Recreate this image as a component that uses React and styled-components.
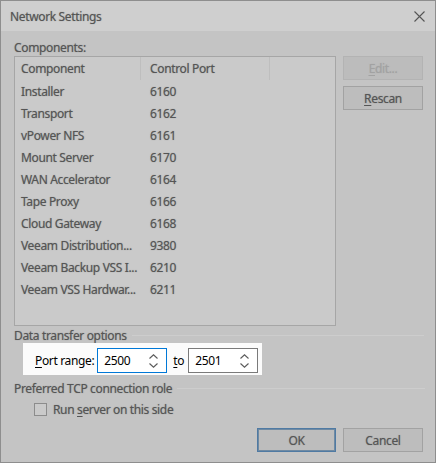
import React from 'react'
import styled, { createGlobalStyle } from 'styled-components'

const Global = createGlobalStyle`
  html, body { margin: 0; padding: 0; background: #c4c4c4; }
  body { font-family: "Noto Sans", "Liberation Sans", sans-serif; font-size: 12px; letter-spacing: -0.35px; color: #000; }
  * { box-sizing: border-box; }
`

// everything outside the spotlight is greyed and a little soft
const dimText = `
  color: #555555;
  text-shadow: 0 0 1px rgba(90, 90, 90, 0.6);
`

const Window = styled.div`
  width: 436px;
  height: 463px;
  border: 1px solid #8e8e8e;
  background: #c4c4c4;
  display: flex;
  flex-direction: column;
  overflow: hidden;
`

const TitleBar = styled.div`
  height: 30px;
  display: flex;
  align-items: center;
  justify-content: space-between;
  padding: 0 10px 0 9px;
  background: #cfcfcf;
  ${dimText}
`

const Content = styled.div`
  padding: 9px 12px 0 13px;
  ${dimText}
`

const Label = styled.div`
  height: 16px;
  line-height: 16px;
`

const MainRow = styled.div`
  display: flex;
  gap: 7px;
`

const List = styled.div`
  width: 322px;
  height: 270px;
  border: 1px solid #a6a6a6;
  background: #cacaca;
`

const Row = styled.div`
  display: grid;
  grid-template-columns: 126px 129px 1fr;
  height: ${p => (p.header ? '23px' : '22px')};
  align-items: center;
`

const Cell = styled.div`
  padding-left: ${p => p.pad}px;
  height: 100%;
  display: flex;
  align-items: center;
  white-space: nowrap;
  overflow: hidden;
  border-right: ${p => (p.sep ? '1px solid #bebebe' : 'none')};
`

const ButtonCol = styled.div`
  display: flex;
  flex-direction: column;
  gap: 6px;
`

const Button = styled.div`
  width: ${p => p.w || 80}px;
  height: 24px;
  display: flex;
  align-items: center;
  justify-content: center;
  background: ${p => (p.disabled ? '#bcbcbc' : '#bdbdbd')};
  border: 1px solid ${p => (p.primary ? '#4f7aa3' : p.disabled ? '#b3b3b3' : '#a2a2a2')};
  box-shadow: ${p => (p.primary ? 'inset 0 0 0 1px #6f8aa3' : 'none')};
  ${p => (p.disabled ? 'color: #a2a2a2; text-shadow: 0 0 1px rgba(160,160,160,0.7);' : '')}
`

const U = styled.span`
  text-decoration: underline;
  text-underline-offset: 2px;
`

const GroupHead = styled.div`
  display: flex;
  align-items: center;
  gap: 5px;
  height: 16px;
  margin-top: ${p => p.top || 0}px;
  margin-right: ${p => p.right || 0}px;
  &::after {
    content: '';
    flex: 1;
    height: 1px;
    background: #cdcdcd;
  }
`

const SpotRow = styled.div`
  height: 32px;
  padding-left: 22px;
  display: flex;
`

const Spot = styled.div`
  background: #fbfbfb;
  display: flex;
  align-items: center;
  padding: 3px 4px 0 12px;
  gap: 3px;
  color: #000;
`

const SpinBox = styled.div`
  width: 70px;
  height: 25px;
  border: 1px solid ${p => (p.focus ? '#0078d7' : '#7a7a7a')};
  background: #fff;
  display: flex;
  align-items: center;
  justify-content: space-between;
  padding: 0 8px 0 6px;
`

const ToLabel = styled.span`
  margin: 0 1px 0 3px;
`

const Arrows = styled.div`
  display: flex;
  flex-direction: column;
  gap: 4px;
`

const Bottom = styled.div`
  flex: 1;
  padding: 5px 11px 0 13px;
  display: flex;
  flex-direction: column;
  ${dimText}
`

const CheckRow = styled.div`
  display: flex;
  align-items: center;
  gap: 6px;
  margin-top: 5px;
  padding-left: 20px;
  height: 16px;
`

const Box = styled.div`
  width: 13px;
  height: 13px;
  border: 1px solid #8c8c8c;
  background: #cacaca;
`

const Footer = styled.div`
  display: flex;
  justify-content: flex-end;
  gap: 7px;
  margin-top: 11px;
  padding-right: 1px;
`

const rows = [
  ['Installer', '6160'],
  ['Transport', '6162'],
  ['vPower NFS', '6161'],
  ['Mount Server', '6170'],
  ['WAN Accelerator', '6164'],
  ['Tape Proxy', '6166'],
  ['Cloud Gateway', '6168'],
  ['Veeam Distribution...', '9380'],
  ['Veeam Backup VSS I...', '6210'],
  ['Veeam VSS Hardwar...', '6211'],
]

const Chevron = ({ up }) => (
  <svg width="9" height="5" viewBox="0 0 9 5">
    <path d={up ? 'M0.5 4.5 L4.5 0.8 L8.5 4.5' : 'M0.5 0.5 L4.5 4.2 L8.5 0.5'} fill="none" stroke="#5a5a5a" strokeWidth="1.1" />
  </svg>
)

const Spinner = ({ value, focus }) => (
  <SpinBox focus={focus}>
    <span>{value}</span>
    <Arrows>
      <Chevron up />
      <Chevron />
    </Arrows>
  </SpinBox>
)

export default function App() {
  return (
    <>
      <Global />
      <Window>
        <TitleBar>
          <span>Network Settings</span>
          <svg width="11" height="11" viewBox="0 0 11 11">
            <path d="M0.5 0.5 L10.5 10.5 M10.5 0.5 L0.5 10.5" stroke="#555" strokeWidth="1.1" />
          </svg>
        </TitleBar>
        <Content>
          <Label>Components:</Label>
          <MainRow>
            <List>
              <Row header>
                <Cell pad={6} sep>Component</Cell>
                <Cell pad={9} sep>Control Port</Cell>
                <Cell />
              </Row>
              {rows.map(([name, port]) => (
                <Row key={name}>
                  <Cell pad={6}>{name}</Cell>
                  <Cell pad={9}>{port}</Cell>
                  <Cell />
                </Row>
              ))}
            </List>
            <ButtonCol>
              <Button disabled><U>E</U>dit...</Button>
              <Button><U>R</U>escan</Button>
            </ButtonCol>
          </MainRow>
          <GroupHead top={1} right={-1}>Data transfer options</GroupHead>
        </Content>
        <SpotRow>
          <Spot>
            <span><U>P</U>ort range:</span>
            <Spinner value="2500" focus />
            <ToLabel><U>t</U>o</ToLabel>
            <Spinner value="2501" />
          </Spot>
        </SpotRow>
        <Bottom>
          <GroupHead right={-1}>Preferred TCP connection role</GroupHead>
          <CheckRow>
            <Box />
            <span>Run <U>s</U>erver on this side</span>
          </CheckRow>
          <Footer>
            <Button primary w={79}>OK</Button>
            <Button>Cancel</Button>
          </Footer>
        </Bottom>
      </Window>
    </>
  )
}
